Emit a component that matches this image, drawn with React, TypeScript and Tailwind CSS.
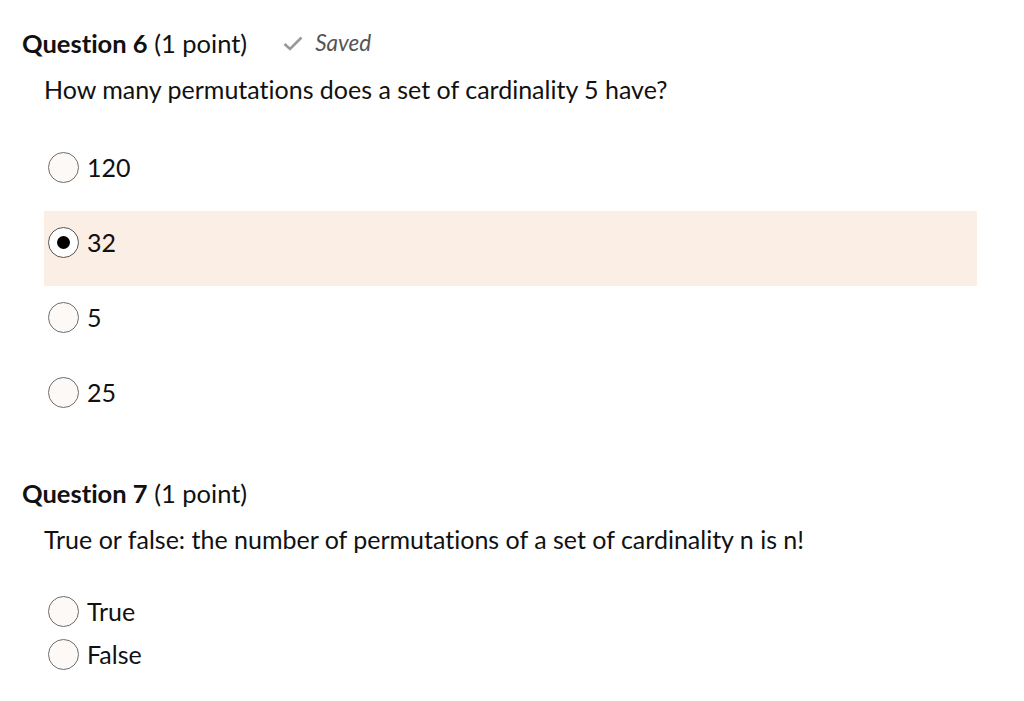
import { useState } from "react";

type Question = {
  num: number
  prompt: string
  options: string[]
  saved?: boolean
  compact?: boolean
}

const questions: Question[] = [
  {
    num: 6,
    prompt: "How many permutations does a set of cardinality 5 have?",
    options: ["120", "32", "5", "25"],
    saved: true,
  },
  {
    num: 7,
    prompt: "True or false: the number of permutations of a set of cardinality n is n!",
    options: ["True", "False"],
    compact: true,
  },
]

const Radio = ({ checked }: { checked: boolean }) => (
  <span
    className={
      checked
        ? "flex items-center justify-center w-[31px] h-[31px] rounded-full border border-[#555] bg-white shrink-0"
        : "flex items-center justify-center w-[31px] h-[31px] rounded-full border border-[#6e6e6e] bg-[#fdf9f6] shrink-0"
    }
  >
    {checked && <span className="w-[13px] h-[13px] rounded-full bg-black" />}
  </span>
)

const QuestionBlock = ({ q, selected, onSelect }: { q: Question; selected: number; onSelect: (i: number) => void }) => (
  <div>
    <div className="flex items-center h-[30px] pl-[22px]">
      <span className="text-[25.5px] text-[#111]">
        <span className="font-bold">Question {q.num}</span> (1 point)
      </span>
      {q.saved && (
        <span className="flex items-center ml-[36px]">
          <svg width="20" height="15" viewBox="0 0 20 15">
            <path d="M1.5 8 L7 13 L18.5 1.5" fill="none" stroke="#999" strokeWidth="2.6" />
          </svg>
          <span className="ml-[12px] italic text-[22.5px] text-[#555]">Saved</span>
        </span>
      )}
    </div>
    <div className="pl-[44px] mt-[17px] h-[30px] flex items-center text-[25px] text-[#111]">{q.prompt}</div>
    <div className={q.compact ? "mt-[41px]" : "mt-[31px]"}>
      {q.options.map((opt, i) => (
        <div
          key={i}
          onClick={() => onSelect(i)}
          className={
            (q.compact ? "h-[43px] pt-0 " : "h-[75px] pt-[16px] ") +
            "ml-[44px] mr-[47px] flex items-start cursor-pointer " +
            (selected === i ? "bg-[#fbeee4]" : "")
          }
        >
          <div className="flex items-center pl-[4px] gap-[8px]">
            <Radio checked={selected === i} />
            <span className="text-[25px] text-[#111] leading-[31px]">{opt}</span>
          </div>
        </div>
      ))}
    </div>
  </div>
)

export default function App() {
  const [answers, setAnswers] = useState<number[]>([1, -1])

  return (
    <div className="w-[1024px] h-[701px] bg-white font-['Lato','Liberation_Sans',sans-serif] [font-variant-ligatures:none] pt-[28px]">
      <QuestionBlock q={questions[0]} selected={answers[0]} onSelect={i => setAnswers([i, answers[1]])} />
      <div className="mt-[42px]">
        <QuestionBlock q={questions[1]} selected={answers[1]} onSelect={i => setAnswers([answers[0], i])} />
      </div>
    </div>
  )
}
